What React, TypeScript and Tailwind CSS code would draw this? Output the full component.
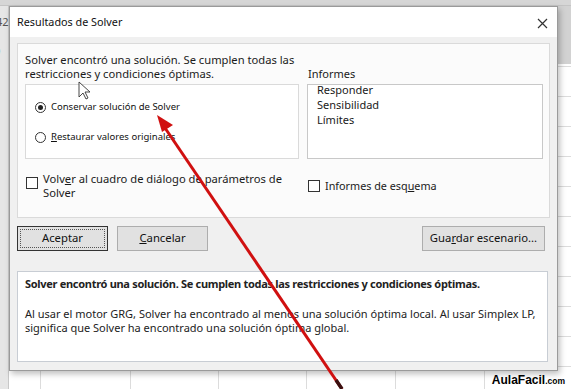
import React from "react";

const font = { fontFamily: '"Noto Sans", "Open Sans", sans-serif' };

function Radio({ checked }: { checked?: boolean }) {
  return (
    <span className="w-[11px] h-[11px] rounded-full border border-[#333] bg-white flex items-center justify-center shrink-0">
      {checked && <span className="w-[5px] h-[5px] rounded-full bg-[#222]" />}
    </span>
  );
}

function Check() {
  return <span className="block w-[12px] h-[12px] border border-[#333] bg-white shrink-0" />;
}

export default function App() {
  const cols = [40, 130, 218, 306, 395, 484];
  return (
    <div className="relative w-[571px] h-[389px] overflow-hidden bg-white" style={font}>
      {/* spreadsheet background */}
      <div className="absolute inset-0">
        <div className="h-[6px] bg-[#d6d6d6] border-b border-[#c4c4c4]" />
        <div className="absolute left-0 top-[6px] w-[9px] h-full bg-[#e6e6e6] border-r border-[#c8c8c8]">
          <div className="text-[11px] text-[#555] leading-none mt-[10px] -ml-[4px]">42</div>
          <div className="text-[11px] text-[#222] leading-none mt-[18px] -ml-[6px]">0</div>
        </div>
        {[36, 66, 96, 126, 156, 186, 216, 246, 276, 306, 336, 366].map((y) => (
          <div key={y} className="absolute left-[9px] right-0 h-px bg-[#dcdcdc]" style={{ top: y }} />
        ))}
        {cols.map((x) => (
          <div key={x} className="absolute top-[6px] bottom-0 w-px bg-[#dcdcdc]" style={{ left: x }} />
        ))}
        <div className="absolute left-[558px] top-[6px] w-[13px] h-[58px] bg-[#d2d2d2]" />
      </div>

      {/* dialog */}
      <div className="absolute left-[9px] top-[6px] w-[549px] h-[365px] bg-[#f0f0f0] border border-[#9a9a9a] shadow-[2px_3px_6px_rgba(0,0,0,0.25)] flex flex-col">
        <div className="h-[30px] bg-white flex items-center justify-between pl-[7px] pr-[8px] shrink-0">
          <span className="text-[10.8px] text-[#111]">Resultados de Solver</span>
          <svg width="11" height="11" viewBox="0 0 11 11" className="mr-[1px] mt-[2px]">
            <path d="M1 1 L10 10 M10 1 L1 10" stroke="#333" strokeWidth="1.2" />
          </svg>
        </div>
        <div className="flex-1 flex flex-col px-[7px] pt-[6px]">
          {/* upper panel */}
          <div className="h-[175px] w-[533px] bg-[#fbfbfb] border border-[#dadada] flex flex-col pl-[7px] pr-[5px] pt-[9px]">
            <div className="flex gap-[8px]">
              <div className="w-[274px] flex flex-col">
                <div className="text-[11.2px] leading-[14px] text-[#1a1a1a] whitespace-nowrap">
                  Solver encontró una solución. Se cumplen todas las
                  <br />
                  restricciones y condiciones óptimas.
                </div>
                <div className="mt-[3px] h-[75px] bg-white border border-[#dadada] flex flex-col pl-[9px] pt-[15px] gap-[16px]">
                  <div className="flex items-center gap-[5px]">
                    <Radio checked />
                    <span className="text-[9.5px] text-[#111]">Conservar solución de Solver</span>
                  </div>
                  <div className="flex items-center gap-[5px]">
                    <Radio />
                    <span className="text-[9.5px] text-[#111]">
                      <u>R</u>estaurar valores originales
                    </span>
                  </div>
                </div>
              </div>
              <div className="w-[236px] flex flex-col pt-[14px]">
                <div className="text-[11px] leading-[14px] text-[#1a1a1a] pl-[1px]">Informes</div>
                <div className="mt-[3px] h-[75px] bg-white border border-[#c8c8c8] pl-[9px] text-[11px] leading-[15px] text-[#1a1a1a]">
                  <div className="-mt-[3px]">
                    <div>Responder</div>
                    <div>Sensibilidad</div>
                    <div>Límites</div>
                  </div>
                </div>
              </div>
            </div>
            <div className="flex mt-[13px]">
              <div className="w-[282px] flex items-start gap-[5px] pl-[1px]">
                <div className="pt-[5px]"><Check /></div>
                <span className="text-[11.2px] leading-[14px] text-[#1a1a1a]">
                  Volv<u>e</u>r al cuadro de diálogo de parámetros de
                  <br />
                  Solver
                </span>
              </div>
              <div className="flex items-center gap-[5px] h-[20px] mt-[4px] pl-[1px]">
                <Check />
                <span className="text-[10.8px] text-[#1a1a1a]">
                  Informes de esq<u>u</u>ema
                </span>
              </div>
            </div>
          </div>

          {/* buttons */}
          <div className="flex items-center mt-[8px] h-[25px]">
            <div className="w-[91px] h-[25px] bg-[#e1e1e1] border border-[#333] p-[2px]">
              <div className="w-full h-full border border-dotted border-[#555] flex items-center justify-center text-[11.3px] text-[#111]">
                Aceptar
              </div>
            </div>
            <div className="ml-[9px] w-[91px] h-[25px] bg-[#e1e1e1] border border-[#adadad] flex items-center justify-center text-[11.3px] text-[#111]">
              <span><u>C</u>ancelar</span>
            </div>
            <div className="ml-auto mr-[5px] w-[123px] h-[25px] bg-[#e1e1e1] border border-[#adadad] flex items-center justify-center text-[11.3px] text-[#111]">
              <span>Gua<u>r</u>dar escenario...</span>
            </div>
          </div>

          {/* lower panel */}
          <div className="mt-[20px] w-[531px] h-[91px] bg-white border border-[#c8cdd4] pl-[7px] pt-[5px] text-[11px] leading-[14px] text-[#222]">
            <div className="font-bold tracking-[-0.3px]">Solver encontró una solución. Se cumplen todas las restricciones y condiciones óptimas.</div>
            <div className="mt-[16px]">
              Al usar el motor GRG, Solver ha encontrado al menos una solución óptima local. Al usar Simplex LP,
              <br />
              significa que Solver ha encontrado una solución óptima global.
            </div>
          </div>
        </div>
      </div>

      {/* red arrow + cursor overlay */}
      <svg className="absolute inset-0 pointer-events-none" width="571" height="389">
        <line x1="163" y1="125" x2="342" y2="389" stroke="#d01010" strokeWidth="3" />
        <polygon points="157,115 173,125 162,132" fill="#d01010" />
        <line x1="336" y1="380" x2="342" y2="389" stroke="#3a1010" strokeWidth="3.5" />
        <path d="M79 82 L79 97 L83 93 L86 99 L88 98 L85 92 L90 92 Z" fill="white" stroke="#333" strokeWidth="0.9" />
      </svg>

      {/* watermark */}
      <div className="absolute right-[6px] bottom-[3px] flex items-baseline text-black font-bold" style={{ fontFamily: '"Liberation Sans", Arial, sans-serif' }}>
        <span className="text-[12px] leading-none">AulaFacil</span>
        <span className="text-[8.5px] leading-none">.com</span>
      </div>
    </div>
  );
}
